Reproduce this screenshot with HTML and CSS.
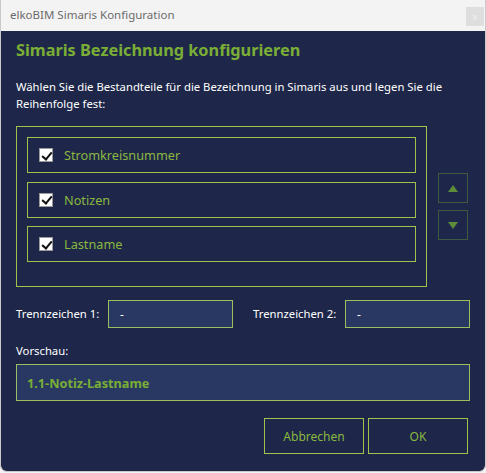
FILE: index.html
```html
<!DOCTYPE html>
<html lang="de">

<head>
	<meta charset="UTF-8" />
	<meta name="viewport" content="width=device-width, initial-scale=1.0" />
	<title>elkoBIM Simaris Konfiguration</title>
	<link rel="stylesheet" href="styles.css">
</head>

<body>
	<div class="window">
		<div class="titlebar">
			<span class="title">elkoBIM Simaris Konfiguration</span>
			<span class="close">x</span>
		</div>
		<div class="content">
			<h1 class="heading">Simaris Bezeichnung konfigurieren</h1>
			<p class="intro">Wählen Sie die Bestandteile für die Bezeichnung in Simaris aus und legen Sie die Reihenfolge fest:</p>

			<div class="order-row">
				<div class="group">
					<label class="item"><span class="check"></span>Stromkreisnummer</label>
					<label class="item"><span class="check"></span>Notizen</label>
					<label class="item"><span class="check"></span>Lastname</label>
				</div>
				<div class="arrows">
					<button class="arrow-btn"><span class="tri-up"></span></button>
					<button class="arrow-btn"><span class="tri-down"></span></button>
				</div>
			</div>

			<div class="sep-row">
				<div class="field">
					<span class="label">Trennzeichen 1:</span>
					<div class="input">-</div>
				</div>
				<div class="field">
					<span class="label">Trennzeichen 2:</span>
					<div class="input">-</div>
				</div>
			</div>

			<div class="label preview-label">Vorschau:</div>
			<div class="preview">1.1-Notiz-Lastname</div>

			<div class="actions">
				<button class="btn">Abbrechen</button>
				<button class="btn">OK</button>
			</div>
		</div>
	</div>
</body>

</html>
```

FILE: styles.css
```css
* {
	box-sizing: border-box;
}

body {
	margin: 0;
	background-color: #f3f3f3;
	font-family: "Noto Sans", "Open Sans", sans-serif;
}

.window {
	width: 486px;
	height: 472px;
	border: 1px solid #c9c9c9;
	border-top: none;
	border-radius: 0 0 7px 7px;
	overflow: hidden;
	display: flex;
	flex-direction: column;
	background-color: #1e2749;
}

.titlebar {
	height: 31px;
	flex: none;
	background-color: #f3f3f3;
	display: flex;
	align-items: center;
	justify-content: space-between;
	padding: 0 1px 2px 9px;
}

.title {
	font-size: 11.5px;
	color: #6b6b6b;
}

.close {
	width: 18px;
	height: 19px;
	margin-top: 4px;
	background-color: #dedede;
	color: #f2f2f2;
	font-size: 9px;
	display: flex;
	align-items: center;
	justify-content: center;
}

.content {
	padding: 0 15px;
	display: flex;
	flex-direction: column;
}

.heading {
	margin: 8px 0 0;
	font-size: 16.3px;
	line-height: 22px;
	font-weight: bold;
	color: #7aae36;
}

.intro {
	margin: 17px 0 0;
	font-size: 11.3px;
	line-height: 17px;
	color: #ffffff;
}

.order-row {
	display: flex;
	align-items: center;
	margin-top: 14px;
}

.group {
	width: 411px;
	height: 161px;
	border: 1px solid #a4c24a;
	padding: 10px;
	display: flex;
	flex-direction: column;
	gap: 8.5px;
}

.item {
	height: 36px;
	border: 1px solid #a4c24a;
	display: flex;
	align-items: center;
	padding-left: 11px;
	font-size: 12.7px;
	color: #8ab83f;
}

.check {
	width: 14px;
	height: 14px;
	background-color: #ffffff;
	border: 1px solid #9a9a9a;
	margin-right: 11px;
	position: relative;
}

.check::after {
	content: "";
	position: absolute;
	left: 3.5px;
	top: 0.5px;
	width: 4px;
	height: 8px;
	border: solid #111;
	border-width: 0 2px 2px 0;
	transform: rotate(40deg);
}

.arrows {
	margin-left: 11px;
	display: flex;
	flex-direction: column;
	gap: 7px;
}

.arrow-btn {
	width: 30px;
	height: 30px;
	padding: 0;
	border: 1px solid #3f5a3e;
	background-color: transparent;
	display: flex;
	align-items: center;
	justify-content: center;
}

.tri-up {
	border-left: 5px solid transparent;
	border-right: 5px solid transparent;
	border-bottom: 7px solid #5d8c3a;
}

.tri-down {
	border-left: 5px solid transparent;
	border-right: 5px solid transparent;
	border-top: 7px solid #5d8c3a;
}

.sep-row {
	display: grid;
	grid-template-columns: 1fr 1fr;
	margin-top: 13px;
	gap: 20px;
}

.field {
	display: flex;
	align-items: center;
	justify-content: space-between;
}

.label {
	font-size: 11.3px;
	line-height: 16px;
	color: #ffffff;
	white-space: nowrap;
}

.input {
	width: 125px;
	height: 28px;
	border: 1px solid #9cbf5e;
	background-color: #283862;
	color: #ffffff;
	font-size: 12px;
	display: flex;
	align-items: center;
	padding-left: 11px;
}

.preview-label {
	margin-top: 15px;
}

.preview {
	margin-top: 5px;
	height: 37px;
	border: 1px solid #9cbf5e;
	background-color: #283862;
	color: #7aae36;
	font-size: 12.7px;
	font-weight: bold;
	display: flex;
	align-items: center;
	padding-left: 10px;
}

.actions {
	display: flex;
	justify-content: flex-end;
	gap: 4px;
	margin-top: 17px;
	padding-right: 2px;
}

.btn {
	width: 100px;
	height: 36px;
	border: 1px solid #a4c24a;
	background-color: transparent;
	color: #8ab83f;
	font-family: "Noto Sans", "Open Sans", sans-serif;
	font-size: 12px;
}
```
